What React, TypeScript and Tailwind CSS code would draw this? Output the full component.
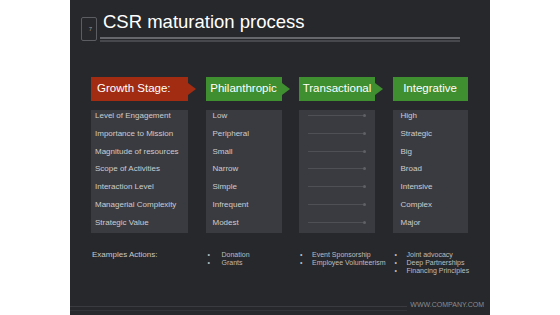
const columns = [
  {
    title: 'Growth Stage:',
    head: 'bg-[#a22c12]',
    arrow: 'border-l-[#a22c12]',
    width: 'w-[97px]',
    align: 'justify-start pl-[6px]',
    textPad: 'pl-[4px]',
    rows: [
      'Level of Engagement',
      'Importance to Mission',
      'Magnitude of resources',
      'Scope of Activities',
      'Interaction Level',
      'Managerial Complexity',
      'Strategic Value',
    ],
  },
  {
    title: 'Philanthropic',
    head: 'bg-[#3f8e30]',
    arrow: 'border-l-[#3f8e30]',
    width: 'w-[76px]',
    align: 'justify-center',
    textPad: 'pl-[7px]',
    rows: ['Low', 'Peripheral', 'Small', 'Narrow', 'Simple', 'Infrequent', 'Modest'],
  },
  {
    title: 'Transactional',
    head: 'bg-[#3f8e30]',
    arrow: 'border-l-[#3f8e30]',
    width: 'w-[76px]',
    align: 'justify-center',
    textPad: 'pl-[9px]',
    rows: null,
  },
  {
    title: 'Integrative',
    head: 'bg-[#3f8e30]',
    arrow: '',
    width: 'w-[75px]',
    align: 'justify-center',
    textPad: 'pl-[8px]',
    rows: ['High', 'Strategic', 'Big', 'Broad', 'Intensive', 'Complex', 'Major'],
  },
]

const examples = [
  { items: ['Donation', 'Grants'], pad: 'pl-[2px]', bullet: 'w-[14px]' },
  { items: ['Event Sponsorship', 'Employee Volunteerism'], pad: 'pl-[1px]', bullet: 'w-[12px]' },
  { items: ['Joint advocacy', 'Deep Partnerships', 'Financing Principles'], pad: 'pl-[2px]', bullet: 'w-[12px]' },
]

export default function App() {
  return (
    <div className="w-[560px] h-[315px] bg-white flex font-['Liberation_Sans',Arial,sans-serif]">
      <div className="ml-[70px] w-[420px] h-full bg-[#27282c] flex flex-col">
        {/* Title */}
        <div className="flex items-start pt-[12px] pl-[11px]">
          <div className="mt-[5px] w-[16px] h-[24px] border border-[#5c5d62] rounded-[2px] flex items-center justify-center pl-[3px]">
            <span className="text-[6px] leading-none text-[#9a9a9a]">7</span>
          </div>
          <div className="ml-[3px] w-[360px]">
            <h1 className="text-[18.5px] leading-[20px] text-white pl-[3px]">CSR maturation process</h1>
            <div className="mt-[5px] h-[2px] bg-[#66676c]"></div>
            <div className="mt-[1px] h-[2px] bg-[#47484d]"></div>
          </div>
        </div>

        {/* Table */}
        <div className="mt-[35px] flex gap-[17.5px] pl-[21px]">
          {columns.map((col, i) => (
            <div key={i} className={`${col.width} flex flex-col`}>
              <div className={`relative h-[24px] ${col.head} flex items-center ${col.align}`}>
                <span className="text-[11.5px] text-white whitespace-nowrap">{col.title}</span>
                {col.arrow && (
                  <div
                    className={`absolute left-full top-1/2 -translate-y-1/2 w-0 h-0 border-y-[6px] border-y-transparent border-l-[8px] ${col.arrow}`}
                  ></div>
                )}
              </div>
              <div className="mt-[9px] h-[123px] bg-[#3a3b41] flex flex-col gap-[6.77px]">
                {col.rows
                  ? col.rows.map((r, j) => (
                      <div key={j} className={`h-[11px] leading-[11px] text-[8px] text-[#cdcdcd] whitespace-nowrap ${col.textPad}`}>
                        {r}
                      </div>
                    ))
                  : Array.from({ length: 7 }).map((_, j) => (
                      <div key={j} className="h-[11px] flex items-center pl-[9px]">
                        <div className="w-[55px] h-px bg-[#4f5056]"></div>
                        <div className="w-[3px] h-[3px] rounded-full bg-[#606166]"></div>
                      </div>
                    ))}
              </div>
            </div>
          ))}
        </div>

        {/* Examples */}
        <div className="mt-[17.5px] flex gap-[17.5px] pl-[21px]">
          <div className="w-[97px] shrink-0 pl-[1px] text-[8px] leading-[8.3px] text-[#c8c8c8] whitespace-nowrap">Examples Actions:</div>
          {examples.map((ex, i) => (
            <div key={i} className={`${i === 2 ? 'w-[75px]' : 'w-[76px]'} shrink-0 ${ex.pad} flex flex-col`}>
              {ex.items.map((it, j) => (
                <div key={j} className="flex text-[7px] leading-[8.3px] text-[#bdbdbd] whitespace-nowrap">
                  <span className={`${ex.bullet} shrink-0`}>•</span>
                  <span>{it}</span>
                </div>
              ))}
            </div>
          ))}
        </div>

        {/* Footer */}
        <div className="mt-auto pb-[4.5px] flex items-start">
          <div className="flex-1 mt-[4.5px]">
            <div className="h-px bg-[#3a3b40]"></div>
            <div className="mt-[3px] h-px bg-[#323338]"></div>
          </div>
          <span className="ml-[3px] pr-[6px] text-[7px] leading-[8px] text-[#8c8c8c]">WWW.COMPANY.COM</span>
        </div>
      </div>
    </div>
  )
}
